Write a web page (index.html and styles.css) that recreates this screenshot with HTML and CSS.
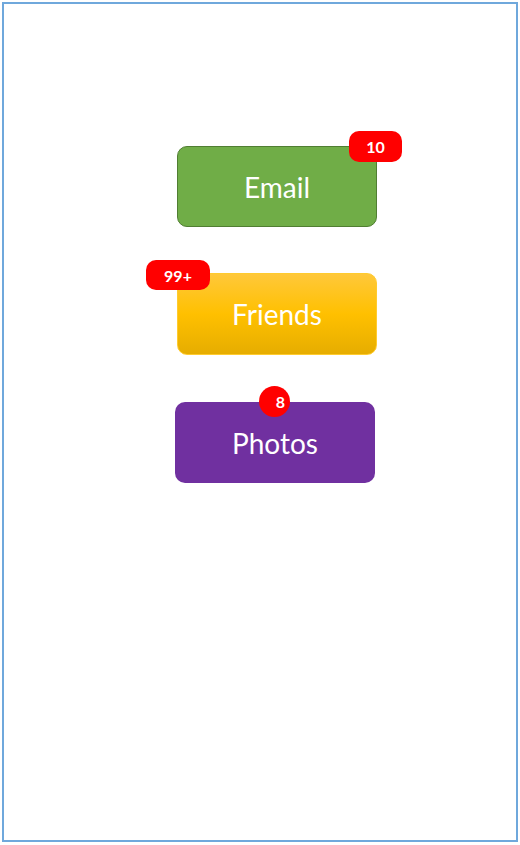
FILE: index.html
```html
<!DOCTYPE html>
<html>
<head>
<meta charset="utf-8">
<link rel="stylesheet" href="styles.css">
</head>
<body>
<div class="frame">
  <div class="stack">
    <div class="tile tile-email">
      <span class="label">Email</span>
      <span class="badge badge-email">10</span>
    </div>
    <div class="tile tile-friends">
      <span class="label">Friends</span>
      <span class="badge badge-friends">99+</span>
    </div>
    <div class="tile tile-photos">
      <span class="label">Photos</span>
      <span class="badge badge-photos">8</span>
    </div>
  </div>
</div>
</body>
</html>
```

FILE: styles.css
```css
html, body {
  margin: 0;
  padding: 0;
  background: #ffffff;
}

.frame {
  box-sizing: border-box;
  margin: 2px;
  width: 516px;
  height: 840px;
  border: 2px solid #6fa8dc;
  background: #ffffff;
}

.stack {
  display: flex;
  flex-direction: column;
  align-items: flex-start;
  padding-top: 142px;
  padding-left: 173px;
  gap: 46px;
}

.tile {
  position: relative;
  box-sizing: border-box;
  width: 200px;
  height: 82px;
  border-radius: 10px;
  display: flex;
  align-items: center;
  justify-content: center;
  font-family: Lato, "Open Sans", sans-serif;
  font-size: 28px;
  color: #ffffff;
}

.tile-email {
  background: #70ad47;
  border: 1.5px solid #507e32;
  height: 81px;
}

.tile-friends {
  background: linear-gradient(180deg, #ffc83a 0%, #ffc000 50%, #e6ad00 100%);
  border: 1px solid #ffcb2e;
}

.tile-photos {
  background: #7030a0;
  margin-left: -2px;
  margin-top: 1px;
  height: 81px;
}

.badge {
  position: absolute;
  background: #ff0000;
  color: #ffffff;
  font-family: Lato, "Open Sans", sans-serif;
  font-weight: 700;
  font-size: 16px;
  display: flex;
  align-items: center;
  justify-content: center;
  box-sizing: border-box;
}

.badge-email {
  width: 53px;
  height: 31px;
  border-radius: 10px;
  top: -16px;
  right: -26px;
}

.badge-friends {
  width: 64px;
  height: 30px;
  border-radius: 10px;
  top: -14px;
  left: -32px;
}

.badge-photos {
  width: 31px;
  height: 31px;
  border-radius: 50%;
  top: -16px;
  left: 84px;
  padding-left: 12px;
}
```
